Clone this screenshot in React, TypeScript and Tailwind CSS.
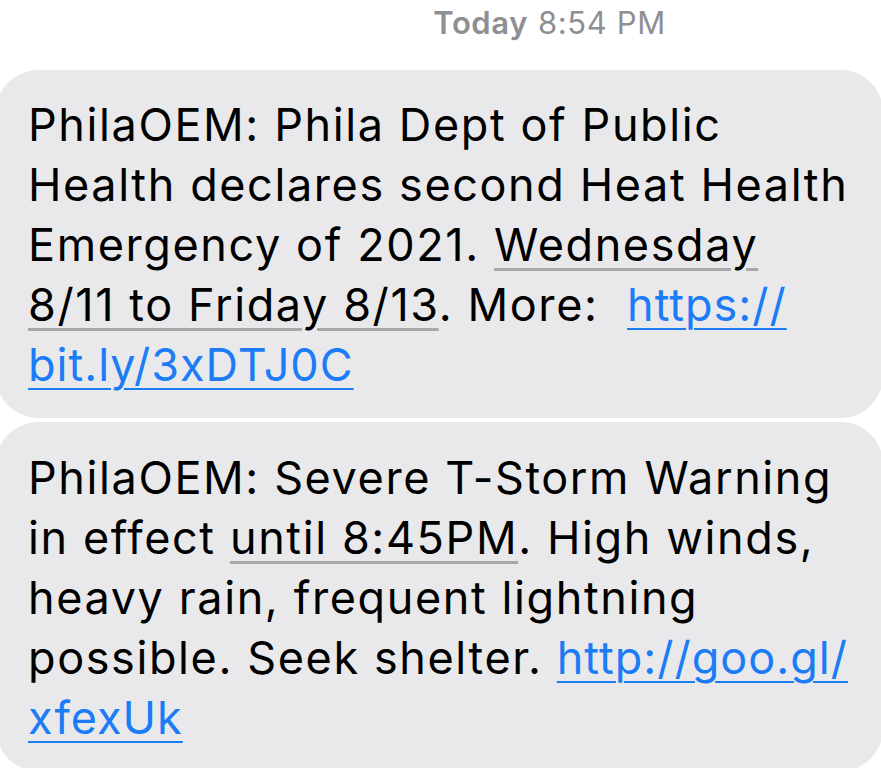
import React from 'react';

const font = { fontFamily: 'Inter, "Noto Sans", sans-serif' };

function Link({ children }: { children: React.ReactNode }) {
  return (
    <span className="text-[#1b7cf6] underline decoration-[#1b7cf6] decoration-2 underline-offset-[7px] tracking-[1px]">
      {children}
    </span>
  );
}

function Detected({ children }: { children: React.ReactNode }) {
  return (
    <span className="underline decoration-[#a8a8ab] decoration-[3px] underline-offset-[7px]">{children}</span>
  );
}

function Bubble({ children, className }: { children: React.ReactNode; className?: string }) {
  return (
    <div
      className={`ml-[-4px] w-[887px] rounded-[42px] bg-[#e9e9eb] pl-[32px] pr-4 text-[45px] leading-[60px] tracking-[1.6px] text-black ${className ?? ''}`}
    >
      {children}
    </div>
  );
}

export default function App() {
  return (
    <div className="h-[768px] w-[881px] overflow-hidden bg-white" style={font}>
      <div className="flex h-[46px] items-center justify-center pl-[218px] text-[31px] tracking-[0.6px] text-[#8e8e93]">
        <span className="font-semibold">Today</span>
        <span className="ml-[10px]">8:54 PM</span>
      </div>
      <div className="mt-[24px] flex flex-col gap-[4px]">
        <Bubble className="pt-[25px] pb-[23px]">
          PhilaOEM: Phila Dept of Public
          <br />
          Health declares second Heat Health
          <br />
          Emergency of 2021. <Detected>Wednesday</Detected>
          <br />
          <Detected>8/11 to Friday 8/13</Detected>. More:&nbsp; <Link>https://</Link>
          <br />
          <Link>bit.ly/3xDTJ0C</Link>
        </Bubble>
        <Bubble className="pt-[26px] pb-[23px]">
          PhilaOEM: Severe T-Storm Warning
          <br />
          in effect <Detected>until 8:45PM</Detected>. High winds,
          <br />
          heavy rain, frequent lightning
          <br />
          possible. Seek shelter. <Link>http://goo.gl/</Link>
          <br />
          <Link>xfexUk</Link>
        </Bubble>
      </div>
    </div>
  );
}
